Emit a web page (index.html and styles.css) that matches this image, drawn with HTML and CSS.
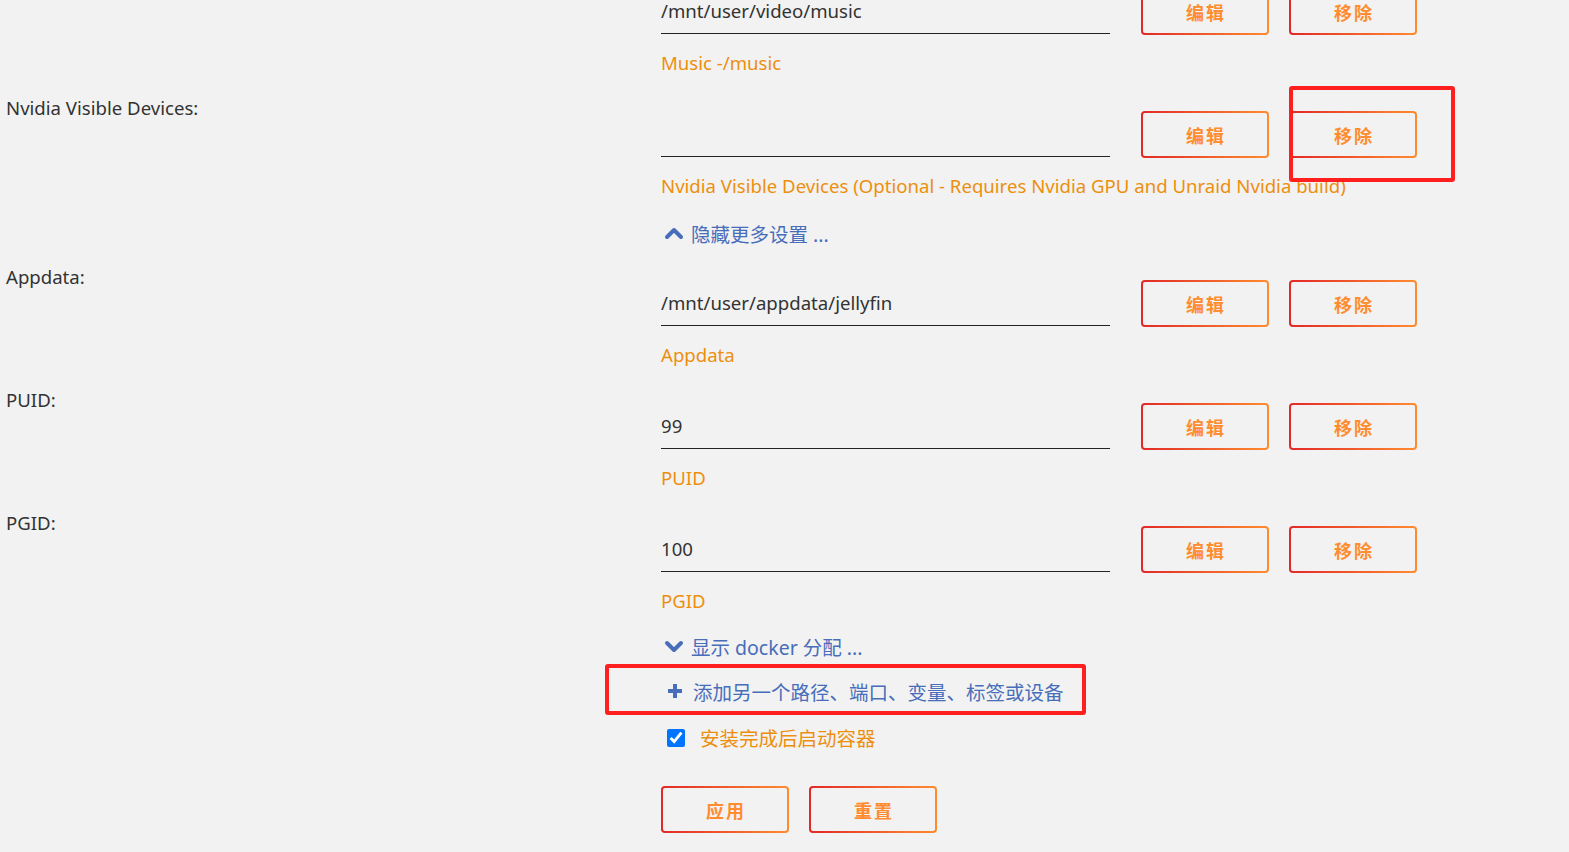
FILE: index.html
```html
<!DOCTYPE html>
<html lang="zh">
<head>
<meta charset="utf-8">
<title>Docker 模板</title>
<link rel="stylesheet" href="styles.css">
</head>
<body>
<div class="form">
  <div class="row row-first">
    <div class="label"></div>
    <div class="field">
      <div class="line">
        <div class="input">/mnt/user/video/music</div>
        <button class="btn">编辑</button>
        <button class="btn">移除</button>
      </div>
      <div class="desc">Music -/music</div>
    </div>
  </div>

  <div class="row">
    <div class="label">Nvidia Visible Devices:</div>
    <div class="field">
      <div class="line">
        <div class="input"></div>
        <button class="btn">编辑</button>
        <button class="btn btn-marked">移除<span class="mark mark-remove"></span></button>
      </div>
      <div class="desc">Nvidia Visible Devices (Optional - Requires Nvidia GPU and Unraid Nvidia build)</div>
    </div>
  </div>

  <div class="link-row link-hide">
    <svg class="ico" width="20" height="14" viewBox="0 0 20 14"><polyline points="3,11 10,4 17,11" fill="none" stroke="#486dba" stroke-width="4" stroke-linecap="round" stroke-linejoin="round"/></svg>
    <span class="cjk">隐藏更多设置 ...</span>
  </div>

  <div class="row">
    <div class="label">Appdata:</div>
    <div class="field">
      <div class="line">
        <div class="input">/mnt/user/appdata/jellyfin</div>
        <button class="btn">编辑</button>
        <button class="btn">移除</button>
      </div>
      <div class="desc">Appdata</div>
    </div>
  </div>

  <div class="row">
    <div class="label">PUID:</div>
    <div class="field">
      <div class="line">
        <div class="input">99</div>
        <button class="btn">编辑</button>
        <button class="btn">移除</button>
      </div>
      <div class="desc">PUID</div>
    </div>
  </div>

  <div class="row">
    <div class="label">PGID:</div>
    <div class="field">
      <div class="line">
        <div class="input">100</div>
        <button class="btn">编辑</button>
        <button class="btn">移除</button>
      </div>
      <div class="desc">PGID</div>
    </div>
  </div>

  <div class="link-row link-show">
    <svg class="ico" width="20" height="14" viewBox="0 0 20 14"><polyline points="3,4 10,11 17,4" fill="none" stroke="#486dba" stroke-width="4" stroke-linecap="round" stroke-linejoin="round"/></svg>
    <span class="cjk">显示 docker 分配 ...</span>
  </div>

  <div class="link-row link-add">
    <span class="mark mark-add"></span>
    <svg class="ico ico-plus" width="18" height="18" viewBox="0 0 18 18"><path d="M9 2v14M2 9h14" fill="none" stroke="#486dba" stroke-width="4"/></svg>
    <span class="cjk">添加另一个路径、端口、变量、标签或设备</span>
  </div>

  <label class="check-row">
    <input type="checkbox" checked>
    <span class="cjk">安装完成后启动容器</span>
  </label>

  <div class="actions">
    <button class="btn">应用</button>
    <button class="btn">重置</button>
  </div>
</div>
</body>
</html>
```

FILE: styles.css
```css
html, body {
  margin: 0;
  padding: 0;
  background: #f2f2f2;
  overflow: hidden;
}
body {
  font-family: "Noto Sans", "Noto Sans CJK SC", sans-serif;
  font-size: 18.6px;
  color: #333;
  height: 852px;
}
.form {
  padding-left: 6px;
}
.row {
  display: grid;
  grid-template-columns: 655px 1fr;
  padding-bottom: 21px;
}
.row-first {
  margin-top: -27px;
}
.label {
  line-height: 24px;
  height: 24px;
  white-space: nowrap;
}
.field {
  padding-top: 15px;
}
.line {
  display: flex;
  align-items: flex-start;
}
.input {
  width: 449px;
  height: 46px;
  box-sizing: border-box;
  border-bottom: 1px solid #222;
  line-height: 46px;
  color: #333;
  white-space: nowrap;
}
.btn {
  position: relative;
  width: 128px;
  height: 47px;
  box-sizing: border-box;
  border: 2px solid transparent;
  border-radius: 4px;
  background:
    linear-gradient(#f2f2f2, #f2f2f2) padding-box,
    linear-gradient(90deg, #e22828, #ff8c2f) border-box;
  color: #ff8c2f;
  font-family: "Noto Sans CJK SC", "Noto Sans", sans-serif;
  font-weight: 700;
  font-size: 18px;
  letter-spacing: 2px;
  padding: 0 0 0 2px;
  cursor: pointer;
}
.line .btn {
  margin-left: 20px;
}
.line .btn:first-of-type {
  margin-left: 31px;
}
.desc {
  margin-top: 16px;
  line-height: 24px;
  color: #ed8f0e;
  white-space: nowrap;
}
.cjk {
  font-size: 19.5px;
}
.link-row {
  position: relative;
  display: flex;
  align-items: center;
  height: 24px;
  margin-left: 655px;
  color: #486dba;
  white-space: nowrap;
}
.link-row .ico {
  margin-left: 3px;
  margin-right: 7px;
}
.link-row .ico-plus {
  margin-left: 5px;
  margin-right: 9px;
}
.link-hide {
  margin-top: 2px;
  margin-bottom: 20px;
}
.link-show {
  margin-top: 0;
}
.link-add {
  margin-top: 21px;
}
.check-row {
  display: flex;
  align-items: center;
  height: 24px;
  margin-top: 22px;
  margin-left: 655px;
  color: #ed8f0e;
}
.check-row input {
  width: 18px;
  height: 18px;
  margin: 2px 15px 0 6px;
  accent-color: #0075ff;
}
.actions {
  display: flex;
  gap: 20px;
  margin-top: 37px;
  margin-left: 655px;
}
.mark {
  position: absolute;
  box-sizing: border-box;
  border: 4px solid #ff1f1f;
  border-radius: 3px;
  pointer-events: none;
}
.mark-remove {
  left: -2px;
  top: -27px;
  width: 166px;
  height: 96px;
}
.mark-add {
  left: -56px;
  top: -15px;
  width: 481px;
  height: 51px;
}
```
